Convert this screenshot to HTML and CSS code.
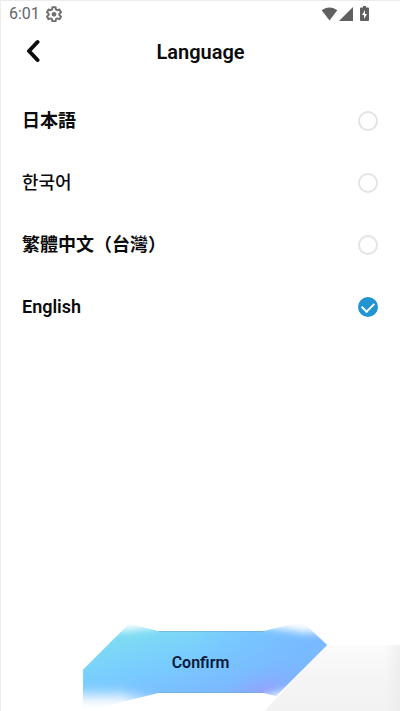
FILE: index.html
```html
<!DOCTYPE html>
<html lang="en">
<head>
<meta charset="utf-8">
<meta name="viewport" content="width=device-width, initial-scale=1">
<title>Language</title>
<link rel="stylesheet" href="styles.css">
</head>
<body>
<div class="screen">
  <div class="status">
    <span class="time">6:01</span>
    <svg class="gear" viewBox="0 0 24 24" aria-hidden="true">
      <path d="M9.600 2h4.800l.6 3.200 2 1.200 3.100-1.100 2.400 4.100-2.500 2.100v2l2.500 2.100-2.400 4.100-3.100-1.100-2 1.200-.6 3.200H9.600l-.6-3.200-2-1.200-3.100 1.100-2.400-4.100L4 13.500v-2L1.500 9.400l2.400-4.100L7 6.400l2-1.200z"/>
      <circle cx="12" cy="12.500" r="3.600"/>
    </svg>
    <span class="signals">
      <svg class="wifi" viewBox="0 0 16 14" aria-hidden="true"><path d="M8 13.500.2 3.300C4.500-.6 11.500-.6 15.800 3.300z"/></svg>
      <svg class="cell" viewBox="0 0 14 14" aria-hidden="true"><path d="M14 0v14H0z"/></svg>
      <svg class="battery" viewBox="0 0 9 15" aria-hidden="true"><path fill-rule="evenodd" d="M3 0h3v1.500h2a1 1 0 0 1 1 1V14a1 1 0 0 1-1 1H1a1 1 0 0 1-1-1V2.500a1 1 0 0 1 1-1h2zM5 4 2 9h2v4l3-5H5z"/></svg>
    </span>
  </div>
  <header class="header">
    <button class="back" type="button" aria-label="Back">
      <svg viewBox="0 0 14 24" aria-hidden="true"><path d="M11.500 3 3 12l8.500 9"/></svg>
    </button>
    <h1 class="title">Language</h1>
  </header>
  <form class="form">
    <div class="options">
      <label class="option" lang="ja"><span class="name">日本語</span><input class="radio" type="radio" name="language"></label>
      <label class="option" lang="ko"><span class="name medium">한국어</span><input class="radio" type="radio" name="language"></label>
      <label class="option" lang="zh-TW"><span class="name">繁體中文（台灣）</span><input class="radio" type="radio" name="language"></label>
      <label class="option"><span class="name">English</span><input class="radio" type="radio" name="language" checked></label>
    </div>
    <div class="footer">
      <svg class="art" viewBox="0 0 400 96" preserveAspectRatio="none" aria-hidden="true">
        <defs>
          <linearGradient id="fill" gradientUnits="userSpaceOnUse" x1="160" y1="10" x2="182" y2="92">
            <stop offset="0" stop-color="#7edcf2"/>
            <stop offset=".45" stop-color="#78ccff"/>
            <stop offset="1" stop-color="#7cb6ff"/>
          </linearGradient>
          <radialGradient id="violet" gradientUnits="userSpaceOnUse" cx="0" cy="0" r="1" gradientTransform="translate(262 76) rotate(-20) scale(60 28)">
            <stop offset="0" stop-color="#98a0ff" stop-opacity=".9"/>
            <stop offset="1" stop-color="#7cb6ff" stop-opacity="0"/>
          </radialGradient>
          <linearGradient id="shade" gradientUnits="userSpaceOnUse" x1="190" y1="0" x2="327" y2="0">
            <stop offset="0" stop-color="#78bcff" stop-opacity="0"/>
            <stop offset="1" stop-color="#78b8ff"/>
          </linearGradient>
          <linearGradient id="grey" x1="0" y1="0" x2="0" y2="1">
            <stop offset="0" stop-color="#fbfbfb"/>
            <stop offset=".5" stop-color="#f5f5f5"/>
            <stop offset="1" stop-color="#f2f2f2"/>
          </linearGradient>
          <linearGradient id="side" gradientUnits="userSpaceOnUse" x1="385" y1="0" x2="400" y2="0">
            <stop offset="0" stop-color="#e8e8e8" stop-opacity="0"/>
            <stop offset="1" stop-color="#e8e8e8" stop-opacity=".6"/>
          </linearGradient>
          <filter id="soft" filterUnits="userSpaceOnUse" x="20" y="-30" width="360" height="180">
            <feGaussianBlur stdDeviation="0 4"/>
          </filter>
          <filter id="softer" filterUnits="userSpaceOnUse" x="20" y="-30" width="360" height="180">
            <feGaussianBlur stdDeviation="0 7"/>
          </filter>
          <clipPath id="outline">
            <path d="M82 55 137 0H295L327 30 258 99H82z"/>
          </clipPath>
          <clipPath id="fan-left-top"><path d="M60-8 158 16H164V50H60z"/></clipPath>
          <clipPath id="fan-left-bottom"><path d="M60 46H164V78H158L60 102z"/></clipPath>
          <clipPath id="fan-right"><path d="M257 16H263L340-2V97L263 78H257z"/></clipPath>
          <mask id="fade" maskUnits="userSpaceOnUse" x="60" y="-10" width="280" height="120">
            <path fill="#fff" d="M158 16H263V78H158z"/>
            <g fill="#fff" clip-path="url(#fan-left-top)"><path filter="url(#soft)" d="M50 15H127L170 10V80H50z"/></g>
            <g fill="#fff" clip-path="url(#fan-left-bottom)"><path filter="url(#softer)" d="M50 10H170V92L120 80 82 80H50z"/></g>
            <g fill="#fff" clip-path="url(#fan-right)"><path filter="url(#soft)" d="M250 9 302 17H350V77H283L250 86z"/></g>
          </mask>
        </defs>
        <path fill="url(#grey)" d="M327 30H400V96H264z"/>
        <path fill="url(#side)" d="M385 30H400V96H385z"/>
        <g clip-path="url(#outline)">
          <g mask="url(#fade)">
            <path fill="url(#fill)" d="M80-10H330V106H80z"/>
            <path fill="url(#shade)" d="M190-10H330V106H190z"/>
            <path fill="url(#violet)" d="M190-10H330V106H190z"/>
          </g>
        </g>
        <path class="edge" d="M158 16.500H263M158 77.500H263"/>
      </svg>
      <button class="confirm" type="button">Confirm</button>
    </div>
  </form>
</div>
</body>
</html>
```

FILE: styles.css
```css
* {
  box-sizing: border-box;
}

body {
  margin: 0;
  background: #fff;
  color: #0b0b0d;
  font-family: Roboto, "Noto Sans CJK JP", sans-serif;
}

.screen {
  display: flex;
  flex-direction: column;
  min-height: 100vh;
  border-top: 1px solid #ececec;
  border-left: 1px solid #ececec;
}

.status {
  display: flex;
  align-items: center;
  height: 25px;
  padding: 0 31px 0 8px;
  color: #666;
}

.time {
  font-size: 16px;
  line-height: 24px;
}

.gear {
  width: 16px;
  height: 16px;
  margin-left: 6px;
  fill: none;
  stroke: #707070;
  stroke-width: 3;
  stroke-linejoin: round;
}

.gear circle {
  fill: #707070;
  stroke: none;
}

.signals {
  display: flex;
  align-items: center;
  margin-left: auto;
  fill: #606060;
}

.wifi {
  width: 17px;
  height: 14px;
}

.cell {
  width: 14px;
  height: 14px;
  margin-left: 1px;
}

.battery {
  width: 9px;
  height: 15px;
  margin-left: 7px;
}

.header {
  display: grid;
  grid-template-columns: 48px 1fr 48px;
  align-items: center;
  height: 52px;
}

.back {
  display: flex;
  padding: 0 0 2px 25px;
  border: 0;
  background: none;
}

.back svg {
  width: 14px;
  height: 24px;
  fill: none;
  stroke: #0b0b0d;
  stroke-width: 4;
  stroke-linecap: round;
  stroke-linejoin: round;
}

.title {
  margin: 0;
  font-size: 20px;
  line-height: 28px;
  font-weight: 600;
  text-align: center;
}

.form {
  display: flex;
  flex: 1;
  flex-direction: column;
  justify-content: space-between;
}

.options {
  padding-top: 12px;
}

.option {
  display: flex;
  align-items: center;
  justify-content: space-between;
  min-height: 62px;
  padding: 0 22px 0 21px;
}

.name {
  font-size: 18px;
  line-height: 24px;
  font-weight: 600;
}

.medium {
  font-weight: 500;
}

.option:lang(ko) {
  font-family: Roboto, "Noto Sans CJK KR", sans-serif;
}

.option:lang(zh) {
  font-family: Roboto, "Noto Sans CJK TC", sans-serif;
}

.radio {
  appearance: none;
  display: grid;
  place-items: center;
  width: 20px;
  height: 20px;
  margin: 0;
  border: 2px solid #e4e4e4;
  border-radius: 50%;
}

.radio:checked {
  border-color: #2294d2;
  background: #2294d2;
}

.radio:checked::before {
  content: "";
  width: 10px;
  height: 6px;
  margin-bottom: 3px;
  border: solid #fff;
  border-width: 0 0 2px 2px;
  transform: rotate(-45deg);
}

.footer {
  position: relative;
  display: flex;
  justify-content: center;
  padding: 16px 0 18px;
}

.art {
  position: absolute;
  inset: 0;
  width: 100%;
  height: 100%;
}

.edge {
  stroke: #6aa9cf;
  stroke-opacity: .6;
}

.confirm {
  position: relative;
  width: 60%;
  height: 62px;
  padding: 2px 0 0;
  border: 0;
  background: none;
  color: #0a1a3c;
  font: 600 16px/24px Roboto, sans-serif;
}
```
